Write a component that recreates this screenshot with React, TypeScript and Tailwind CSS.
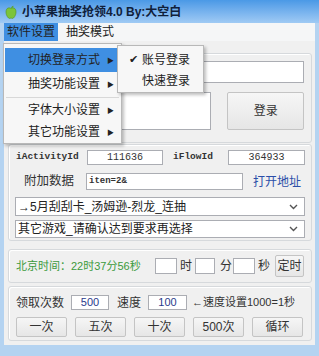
// 小苹果抽奖抢领 window: title bar, menu bar with open dropdown, login / activity / timer / run groups.

const FONT = { fontFamily: '"Liberation Sans", "Noto Sans CJK SC", sans-serif' };
const MONO = { fontFamily: '"Liberation Mono", "Noto Sans CJK SC", monospace' };

function Apple() {
  return (
    <svg width="12" height="14" viewBox="0 0 12 14">
      <path d="M6 3.5C4.5 2.3 1 2.5 1 7c0 3.5 2.3 6.5 3.6 6.5.8 0 1-.4 1.4-.4s.6.4 1.4.4C8.7 13.5 11 10.5 11 7c0-4.5-3.5-4.7-5-3.5z" fill="#7cc43a" stroke="#4f8f1e" strokeWidth="0.6" />
      <path d="M6 3.5C6.2 2 7.2 1 8.6.8 8.4 2.2 7.4 3.2 6 3.5z" fill="#5aa52a" />
    </svg>
  );
}

function Arrow() {
  return <span className="text-[7px] leading-none text-[#222]">▶</span>;
}

function Chevron() {
  return (
    <svg width="9" height="6" viewBox="0 0 9 6" className="mr-[6px]">
      <path d="M1 1l3.5 3.5L8 1" fill="none" stroke="#555" strokeWidth="1.4" />
    </svg>
  );
}

function Btn({ label, className }: { label: string; className: string }) {
  return (
    <div className={`flex items-center justify-center whitespace-nowrap rounded-[2px] border border-[#c4c4c4] bg-gradient-to-b from-[#f6f6f6] to-[#e6e6e6] text-[12px] text-[#333] ${className}`}>
      {label}
    </div>
  );
}

function Group({ className, children }: { className: string; children?: React.ReactNode }) {
  return (
    <div className={`ml-[4px] w-[304px] rounded-[3px] border border-[#d6d9dc] shadow-[inset_1px_1px_0_#fff] ${className}`}>
      {children}
    </div>
  );
}

export default function App() {
  const menu = [
    { label: "切换登录方式", active: true },
    { label: "抽奖功能设置", active: false },
  ];
  const menu2 = ["字体大小设置", "其它功能设置"];
  const runs = ["一次", "五次", "十次", "500次", "循环"];

  return (
    <div className="relative flex h-[356px] w-[319px] flex-col overflow-hidden bg-[#b4d3f1]" style={FONT}>
      {/* title bar */}
      <div className="flex h-[23px] items-center gap-[5px] bg-gradient-to-b from-[#4a99e6] to-[#9fcaf4] pl-[5px]">
        <Apple />
        <span className="text-[12px] font-bold text-[#10203a]">小苹果抽奖抢领4.0 By:大空白</span>
      </div>

      {/* client */}
      <div className="mx-[4px] flex h-[322px] flex-col bg-[#f0f0f0]">
        <div className="flex h-[18px] items-center bg-[#f5f6f7] text-[12px] text-[#222]">
          <div className="flex h-full w-[54px] items-center justify-center bg-[#3f8fe2]">软件设置</div>
          <div className="ml-[8px]">抽奖模式</div>
        </div>

        <Group className="mt-[12px] h-[90px] px-[7px] pt-[7px]">
          <div className="h-[22px] w-full border border-[#abadb3] bg-white" />
          <div className="mt-[9px] flex gap-[16px]">
            <div className="h-[38px] w-[196px] border border-[#abadb3] bg-white" />
            <Btn label="登录" className="h-[38px] w-[77px]" />
          </div>
        </Group>

        <Group className="mt-[1px] h-[97px] px-[6px] pt-[5px]">
          <div className="flex h-[15px] items-center text-[9.5px] font-bold text-[#333]" style={MONO}>
            <span className="w-[72px] pl-[1px]">iActivityId</span>
            <div className="flex h-[15px] w-[76px] items-center justify-center border border-[#abadb3] bg-white text-[10px] font-normal">111636</div>
            <span className="ml-[10px] w-[55px]">iFlowId</span>
            <div className="flex h-[15px] w-[77px] items-center justify-center border border-[#abadb3] bg-white text-[10px] font-normal">364933</div>
          </div>
          <div className="mt-[8px] flex h-[17px] items-center">
            <span className="ml-[9px] w-[62px] text-[12.5px] text-[#333]">附加数据</span>
            <div className="flex h-[17px] w-[157px] items-center border border-[#abadb3] bg-white pl-[2px] text-[9px] font-bold text-[#333]" style={MONO}>iten=2&amp;</div>
            <span className="ml-[10px] text-[12px] text-[#2b4ea8]">打开地址</span>
          </div>
          <div className="mt-[7px] flex h-[19px] items-center justify-between border border-[#abadb3] bg-white pl-[2px] text-[12px] text-[#222]">
            <span>→5月刮刮卡_汤姆逊-烈龙_连抽</span>
            <Chevron />
          </div>
          <div className="mt-[4px] flex h-[18px] items-center justify-between border border-[#abadb3] bg-white pl-[2px] text-[12px] text-[#222]">
            <span>其它游戏_请确认达到要求再选择</span>
            <Chevron />
          </div>
        </Group>

        <Group className="mt-[8px] flex h-[34px] items-center whitespace-nowrap pl-[7px] text-[12px] text-[#333]">
          <span className="w-[139px] text-[11px] text-[#3c9a3c]">北京时间：22时37分56秒</span>
          <div className="h-[16px] w-[22px] border border-[#abadb3] bg-white" />
          <span className="ml-[3px] w-[15px]">时</span>
          <div className="h-[16px] w-[20px] border border-[#abadb3] bg-white" />
          <span className="ml-[5px] w-[13px]">分</span>
          <div className="h-[16px] w-[22px] border border-[#abadb3] bg-white" />
          <span className="ml-[3px] w-[17px]">秒</span>
          <Btn label="定时" className="h-[22px] w-[29px]" />
        </Group>

        <Group className="mt-[3px] h-[55px] pl-[7px] pr-[8px] pt-[8px] text-[12px] text-[#333]">
          <div className="flex h-[15px] items-center whitespace-nowrap">
            <span className="w-[55px]">领取次数</span>
            <div className="flex h-[15px] w-[38px] items-center justify-center border border-[#abadb3] bg-white text-[11px] text-[#2a3a8c]">500</div>
            <span className="ml-[8px] w-[31px]">速度</span>
            <div className="flex h-[15px] w-[39px] items-center justify-center border border-[#abadb3] bg-white text-[11px] text-[#2a3a8c]">100</div>
            <span className="ml-[5px] text-[11px]">←速度设置1000=1秒</span>
          </div>
          <div className="mt-[7px] flex justify-between">
            {runs.map((r) => (
              <Btn key={r} label={r} className="h-[20px] w-[51px]" />
            ))}
          </div>
        </Group>
      </div>

      {/* open dropdown */}
      <div className="absolute left-[3px] top-[43px] h-[101px] w-[119px] border border-[#b8b8b8] bg-[#f7f7f7] pt-[4px] text-[12px] text-[#222] shadow-[2px_2px_3px_rgba(0,0,0,0.25)]">
        {menu.map((m) => (
          <div key={m.label} className={`mx-[1px] flex h-[24px] items-center pl-[23px] pr-[6px] ${m.active ? "bg-[#3f8fe2]" : ""}`}>
            <span className="flex-1">{m.label}</span>
            <Arrow />
          </div>
        ))}
        <div className="mx-[2px] my-[1px] h-[1px] bg-[#d8d8d8]" />
        {menu2.map((m) => (
          <div key={m} className="mx-[1px] flex h-[22px] items-center pl-[23px] pr-[6px]">
            <span className="flex-1">{m}</span>
            <Arrow />
          </div>
        ))}
      </div>

      {/* submenu */}
      <div className="absolute left-[117px] top-[45px] h-[48px] w-[87px] border border-[#b8b8b8] bg-[#f7f7f7] pt-[3px] text-[12px] text-[#222] shadow-[2px_2px_3px_rgba(0,0,0,0.25)]">
        <div className="flex h-[21px] items-center pl-[11px]">
          <span className="w-[13px] text-[11px]">✔</span>
          <span>账号登录</span>
        </div>
        <div className="flex h-[21px] items-center pl-[24px]">快速登录</div>
      </div>
    </div>
  );
}
